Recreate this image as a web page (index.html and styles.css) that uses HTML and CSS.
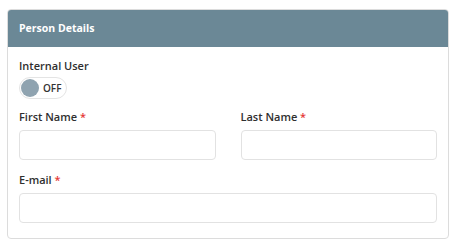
FILE: index.html
```
<!DOCTYPE html>
<html>
<head>
<meta charset="utf-8">
<link rel="stylesheet" href="styles.css">
</head>
<body>
<div class="page">
  <div class="card">
    <div class="card-header">Person Details</div>
    <div class="card-body">
      <div class="field">
        <div class="label">Internal User</div>
        <div class="toggle"><span class="knob"></span><span class="toggle-text">OFF</span></div>
      </div>
      <div class="row">
        <div class="col">
          <div class="label">First Name <span class="req">*</span></div>
          <div class="input"></div>
        </div>
        <div class="col">
          <div class="label">Last Name <span class="req">*</span></div>
          <div class="input"></div>
        </div>
      </div>
      <div class="field email">
        <div class="label">E-mail <span class="req">*</span></div>
        <div class="input"></div>
      </div>
    </div>
  </div>
</div>
</body>
</html>
```
FILE: styles.css
```
html, body { margin: 0; padding: 0; background: #fff; }
body { font-family: "Open Sans", "Noto Sans", sans-serif; color: #333; }
.page { padding: 9px 9px 0 7px; }
.card {
  width: 440px;
  border: 1px solid #dcdcdc;
  border-radius: 4px;
  overflow: hidden;
}
.card-header {
  background: #6b8896;
  color: #fff;
  font-weight: 700;
  font-size: 10.5px;
  height: 37px;
  line-height: 37px;
  padding-left: 11px;
}
.card-body { padding: 11px 11px 15px 11px; display: flex; flex-direction: column; }
.label { font-size: 11px; line-height: 16px; color: #2f2f2f; font-weight: 600; }
.req { color: #e53935; }
.toggle {
  margin-top: 3px;
  width: 46px; height: 20px;
  border: 1px solid #e4e4e4; border-radius: 11px;
  display: flex; align-items: center;
}
.knob { width: 18px; height: 18px; border-radius: 50%; background: #8fa3b0; margin-left: 1px; }
.toggle-text { font-size: 10px; margin-left: 4px; color: #333; font-weight: 600; }
.row { display: flex; gap: 25px; margin-top: 10px; }
.col { flex: 1; }
.input {
  margin-top: 5px;
  height: 28px;
  border: 1px solid #e2e2e2;
  border-radius: 4px;
}
.email { margin-top: 12px; }
```
